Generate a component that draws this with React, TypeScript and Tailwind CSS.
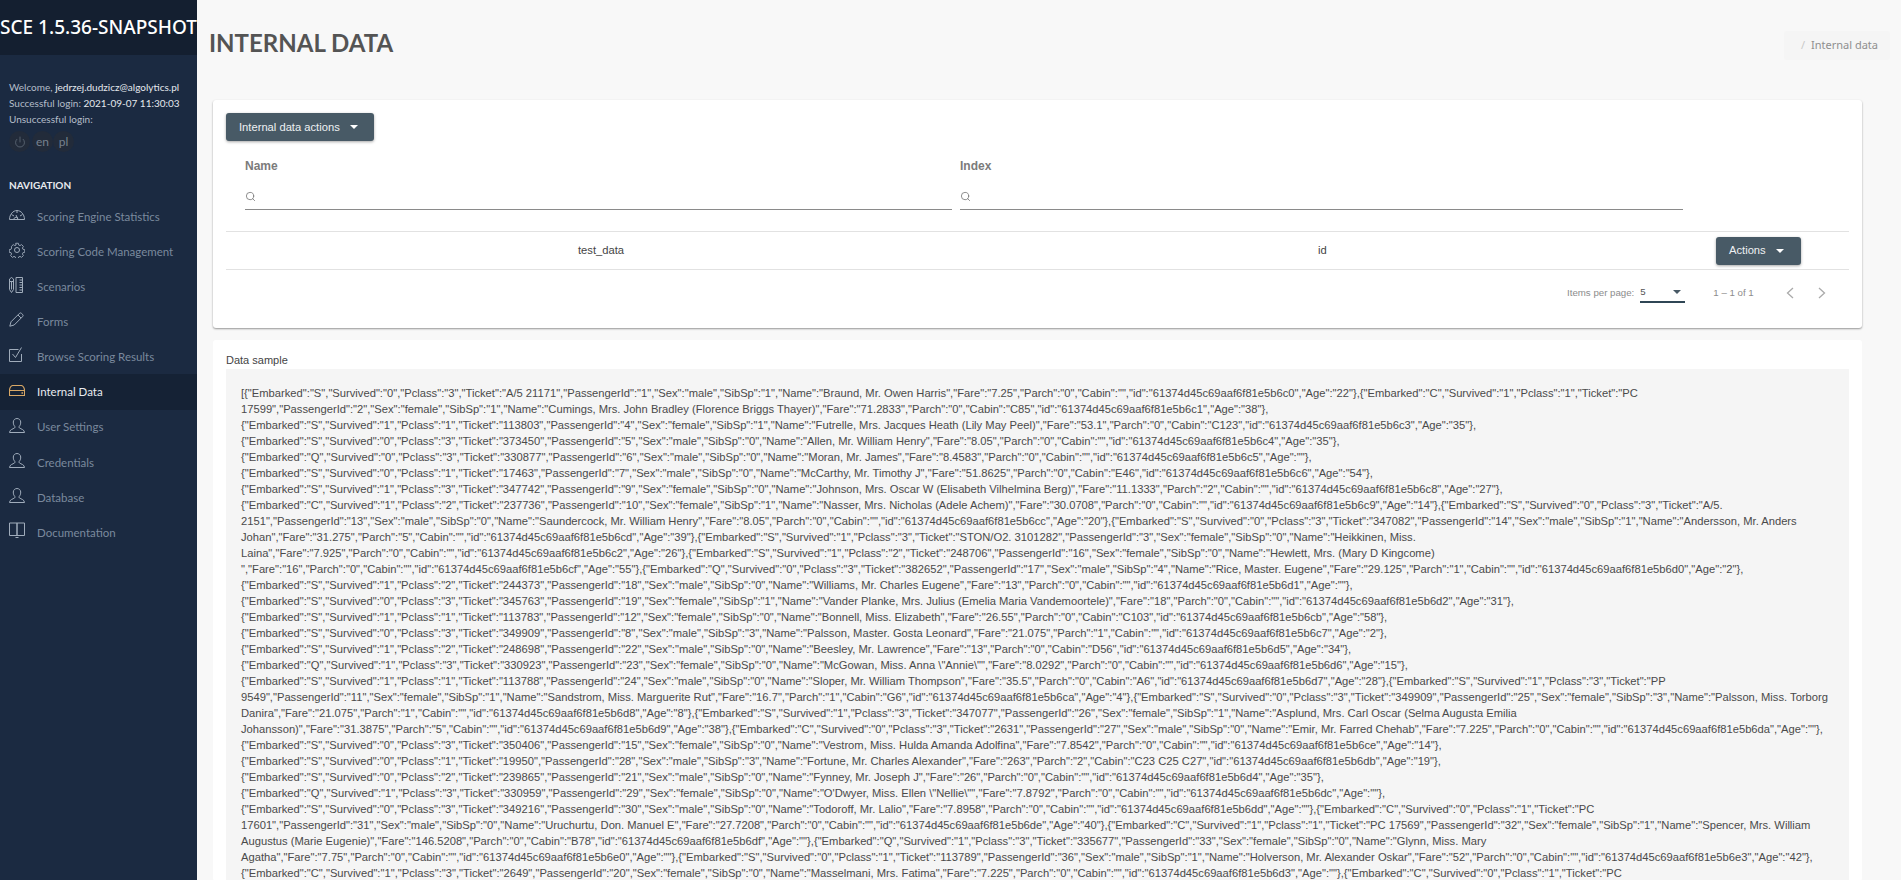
import React from 'react'
import { Search, Power } from 'lucide-react'

const NAV_FONT = 'font-["Lato",sans-serif]'

const Gauge = () => (
  <svg viewBox="0 0 16 10" className="w-4 h-[10px]" fill="none" stroke="currentColor" strokeWidth="1">
    <path d="M.5 9.500C.5 4.500 4 .5 8 .5s7.500 4 7.500 9z" />
    <path d="M2.500 4.500 5 6M8 .5v2.500M13.500 4.500 11 6M4.500 9.500A3.500 3.500 0 0 1 8 7l1 2.500L7 5" />
  </svg>
)

const Cog = () => (
  <svg viewBox="0 0 16 16" className="w-4 h-4" fill="none" stroke="currentColor" strokeWidth="1">
    <path d="M6.500.5h3l.4 2 1.400.6 1.800-1.100 2 2-1.100 1.800.6 1.400 2 .4v3l-2 .4-.6 1.400 1.100 1.800-2 2-1.800-1.100-1.400.6-.4 2h-3l-.4-2-1.400-.6-1.800 1.100-2-2 1.100-1.800-.6-1.400-2-.4v-3l2-.4.6-1.400L1.800 4l2-2 1.800 1.100L7 2.500z" transform="translate(0.8 0.8) scale(0.9)" />
    <circle cx="8" cy="8" r="2.500" />
  </svg>
)

const Layers = () => (
  <svg viewBox="0 0 14 16" className="w-[14px] h-4" fill="none" stroke="currentColor" strokeWidth="1">
    <path d="M.5 2 2.500.5 4.500 2v10.500L2.500 15.500 .5 12.500zM.5 4.500h4M2.500 4.500v8" />
    <path d="M7 .5h6.500v15H7zM10.500 3h3M10.500 5.500h3M10.500 8h3M10.500 10.500h3M10.500 13h3" />
  </svg>
)

const Pencil = () => (
  <svg viewBox="0 0 15 15" className="w-[15px] h-[15px]" fill="none" stroke="currentColor" strokeWidth="1">
    <path d="M.8 14.200 2 9.800 10.300 1.500a1.700 1.700 0 0 1 2.400 0l.8.8a1.700 1.700 0 0 1 0 2.400L5.200 13z" />
    <path d="M9 3l3 3" />
  </svg>
)

const Check = () => (
  <svg viewBox="0 0 14 15" className="w-[14px] h-[15px]" fill="none" stroke="currentColor" strokeWidth="1">
    <path d="M12.500 7v7.500H.5V2.500h9" />
    <path d="M3.500 7l3 3.500L12.500.5" />
  </svg>
)

const Drawer = () => (
  <svg viewBox="0 0 16 11" className="w-4 h-[11px]" fill="none" stroke="currentColor" strokeWidth="1.100">
    <path d="M.5 5.500C.5 3 2 .5 4 .5h8c2 0 3.500 2.500 3.500 5v5H.5zM.5 5.500h15" />
    <path d="M12.500 8h1.500" strokeWidth="1.500" />
  </svg>
)

const UserIcon = () => (
  <svg viewBox="0 0 16 15" className="w-4 h-[15px]" fill="none" stroke="currentColor" strokeWidth="1">
    <path d="M.5 14.500h15c0-2.800-3.500-3.500-5-4.500-.6-.5-.6-1.500 0-2 1-1 1.200-2.500 1.200-4C11.700 2 10 .5 8 .5S4.300 2 4.300 4c0 1.500.2 3 1.200 4 .6.500.6 1.500 0 2-1.500 1-5 1.700-5 4.500z" />
  </svg>
)

const Book = () => (
  <svg viewBox="0 0 16 16" className="w-4 h-4" fill="none" stroke="currentColor" strokeWidth="1">
    <path d="M.5 1h7.500v12.500H.5zM8 1h7.500v12.500H8zM6.500 15.500h3" />
  </svg>
)

const Caret = ({ className }: { className: string }) => (
  <span className={`w-0 h-0 border-x-4 border-x-transparent border-t-4 ${className}`} />
)

const NAV = [
  { label: 'Scoring Engine Statistics', icon: <Gauge /> },
  { label: 'Scoring Code Management', icon: <Cog /> },
  { label: 'Scenarios', icon: <Layers /> },
  { label: 'Forms', icon: <Pencil /> },
  { label: 'Browse Scoring Results', icon: <Check /> },
  { label: 'Internal Data', icon: <Drawer />, active: true },
  { label: 'User Settings', icon: <UserIcon /> },
  { label: 'Credentials', icon: <UserIcon /> },
  { label: 'Database', icon: <UserIcon /> },
  { label: 'Documentation', icon: <Book /> },
]

const ID = '61374d45c69aaf6f81e5b6'

const SAMPLE = [
  `[{"Embarked":"S","Survived":"0","Pclass":"3","Ticket":"A/5 21171","PassengerId":"1","Sex":"male","SibSp":"1","Name":"Braund, Mr. Owen Harris","Fare":"7.25","Parch":"0","Cabin":"","id":"${ID}c0","Age":"22"},{"Embarked":"C","Survived":"1","Pclass":"1","Ticket":"PC`,
  `17599","PassengerId":"2","Sex":"female","SibSp":"1","Name":"Cumings, Mrs. John Bradley (Florence Briggs Thayer)","Fare":"71.2833","Parch":"0","Cabin":"C85","id":"${ID}c1","Age":"38"},`,
  `{"Embarked":"S","Survived":"1","Pclass":"1","Ticket":"113803","PassengerId":"4","Sex":"female","SibSp":"1","Name":"Futrelle, Mrs. Jacques Heath (Lily May Peel)","Fare":"53.1","Parch":"0","Cabin":"C123","id":"${ID}c3","Age":"35"},`,
  `{"Embarked":"S","Survived":"0","Pclass":"3","Ticket":"373450","PassengerId":"5","Sex":"male","SibSp":"0","Name":"Allen, Mr. William Henry","Fare":"8.05","Parch":"0","Cabin":"","id":"${ID}c4","Age":"35"},`,
  `{"Embarked":"Q","Survived":"0","Pclass":"3","Ticket":"330877","PassengerId":"6","Sex":"male","SibSp":"0","Name":"Moran, Mr. James","Fare":"8.4583","Parch":"0","Cabin":"","id":"${ID}c5","Age":""},`,
  `{"Embarked":"S","Survived":"0","Pclass":"1","Ticket":"17463","PassengerId":"7","Sex":"male","SibSp":"0","Name":"McCarthy, Mr. Timothy J","Fare":"51.8625","Parch":"0","Cabin":"E46","id":"${ID}c6","Age":"54"},`,
  `{"Embarked":"S","Survived":"1","Pclass":"3","Ticket":"347742","PassengerId":"9","Sex":"female","SibSp":"0","Name":"Johnson, Mrs. Oscar W (Elisabeth Vilhelmina Berg)","Fare":"11.1333","Parch":"2","Cabin":"","id":"${ID}c8","Age":"27"},`,
  `{"Embarked":"C","Survived":"1","Pclass":"2","Ticket":"237736","PassengerId":"10","Sex":"female","SibSp":"1","Name":"Nasser, Mrs. Nicholas (Adele Achem)","Fare":"30.0708","Parch":"0","Cabin":"","id":"${ID}c9","Age":"14"},{"Embarked":"S","Survived":"0","Pclass":"3","Ticket":"A/5.`,
  `2151","PassengerId":"13","Sex":"male","SibSp":"0","Name":"Saundercock, Mr. William Henry","Fare":"8.05","Parch":"0","Cabin":"","id":"${ID}cc","Age":"20"},{"Embarked":"S","Survived":"0","Pclass":"3","Ticket":"347082","PassengerId":"14","Sex":"male","SibSp":"1","Name":"Andersson, Mr. Anders`,
  `Johan","Fare":"31.275","Parch":"5","Cabin":"","id":"${ID}cd","Age":"39"},{"Embarked":"S","Survived":"1","Pclass":"3","Ticket":"STON/O2. 3101282","PassengerId":"3","Sex":"female","SibSp":"0","Name":"Heikkinen, Miss.`,
  `Laina","Fare":"7.925","Parch":"0","Cabin":"","id":"${ID}c2","Age":"26"},{"Embarked":"S","Survived":"1","Pclass":"2","Ticket":"248706","PassengerId":"16","Sex":"female","SibSp":"0","Name":"Hewlett, Mrs. (Mary D Kingcome)`,
  `","Fare":"16","Parch":"0","Cabin":"","id":"${ID}cf","Age":"55"},{"Embarked":"Q","Survived":"0","Pclass":"3","Ticket":"382652","PassengerId":"17","Sex":"male","SibSp":"4","Name":"Rice, Master. Eugene","Fare":"29.125","Parch":"1","Cabin":"","id":"${ID}d0","Age":"2"},`,
  `{"Embarked":"S","Survived":"1","Pclass":"2","Ticket":"244373","PassengerId":"18","Sex":"male","SibSp":"0","Name":"Williams, Mr. Charles Eugene","Fare":"13","Parch":"0","Cabin":"","id":"${ID}d1","Age":""},`,
  `{"Embarked":"S","Survived":"0","Pclass":"3","Ticket":"345763","PassengerId":"19","Sex":"female","SibSp":"1","Name":"Vander Planke, Mrs. Julius (Emelia Maria Vandemoortele)","Fare":"18","Parch":"0","Cabin":"","id":"${ID}d2","Age":"31"},`,
  `{"Embarked":"S","Survived":"1","Pclass":"1","Ticket":"113783","PassengerId":"12","Sex":"female","SibSp":"0","Name":"Bonnell, Miss. Elizabeth","Fare":"26.55","Parch":"0","Cabin":"C103","id":"${ID}cb","Age":"58"},`,
  `{"Embarked":"S","Survived":"0","Pclass":"3","Ticket":"349909","PassengerId":"8","Sex":"male","SibSp":"3","Name":"Palsson, Master. Gosta Leonard","Fare":"21.075","Parch":"1","Cabin":"","id":"${ID}c7","Age":"2"},`,
  `{"Embarked":"S","Survived":"1","Pclass":"2","Ticket":"248698","PassengerId":"22","Sex":"male","SibSp":"0","Name":"Beesley, Mr. Lawrence","Fare":"13","Parch":"0","Cabin":"D56","id":"${ID}d5","Age":"34"},`,
  `{"Embarked":"Q","Survived":"1","Pclass":"3","Ticket":"330923","PassengerId":"23","Sex":"female","SibSp":"0","Name":"McGowan, Miss. Anna \\"Annie\\"","Fare":"8.0292","Parch":"0","Cabin":"","id":"${ID}d6","Age":"15"},`,
  `{"Embarked":"S","Survived":"1","Pclass":"1","Ticket":"113788","PassengerId":"24","Sex":"male","SibSp":"0","Name":"Sloper, Mr. William Thompson","Fare":"35.5","Parch":"0","Cabin":"A6","id":"${ID}d7","Age":"28"},{"Embarked":"S","Survived":"1","Pclass":"3","Ticket":"PP`,
  `9549","PassengerId":"11","Sex":"female","SibSp":"1","Name":"Sandstrom, Miss. Marguerite Rut","Fare":"16.7","Parch":"1","Cabin":"G6","id":"${ID}ca","Age":"4"},{"Embarked":"S","Survived":"0","Pclass":"3","Ticket":"349909","PassengerId":"25","Sex":"female","SibSp":"3","Name":"Palsson, Miss. Torborg`,
  `Danira","Fare":"21.075","Parch":"1","Cabin":"","id":"${ID}d8","Age":"8"},{"Embarked":"S","Survived":"1","Pclass":"3","Ticket":"347077","PassengerId":"26","Sex":"female","SibSp":"1","Name":"Asplund, Mrs. Carl Oscar (Selma Augusta Emilia`,
  `Johansson)","Fare":"31.3875","Parch":"5","Cabin":"","id":"${ID}d9","Age":"38"},{"Embarked":"C","Survived":"0","Pclass":"3","Ticket":"2631","PassengerId":"27","Sex":"male","SibSp":"0","Name":"Emir, Mr. Farred Chehab","Fare":"7.225","Parch":"0","Cabin":"","id":"${ID}da","Age":""},`,
  `{"Embarked":"S","Survived":"0","Pclass":"3","Ticket":"350406","PassengerId":"15","Sex":"female","SibSp":"0","Name":"Vestrom, Miss. Hulda Amanda Adolfina","Fare":"7.8542","Parch":"0","Cabin":"","id":"${ID}ce","Age":"14"},`,
  `{"Embarked":"S","Survived":"0","Pclass":"1","Ticket":"19950","PassengerId":"28","Sex":"male","SibSp":"3","Name":"Fortune, Mr. Charles Alexander","Fare":"263","Parch":"2","Cabin":"C23 C25 C27","id":"${ID}db","Age":"19"},`,
  `{"Embarked":"S","Survived":"0","Pclass":"2","Ticket":"239865","PassengerId":"21","Sex":"male","SibSp":"0","Name":"Fynney, Mr. Joseph J","Fare":"26","Parch":"0","Cabin":"","id":"${ID}d4","Age":"35"},`,
  `{"Embarked":"Q","Survived":"1","Pclass":"3","Ticket":"330959","PassengerId":"29","Sex":"female","SibSp":"0","Name":"O'Dwyer, Miss. Ellen \\"Nellie\\"","Fare":"7.8792","Parch":"0","Cabin":"","id":"${ID}dc","Age":""},`,
  `{"Embarked":"S","Survived":"0","Pclass":"3","Ticket":"349216","PassengerId":"30","Sex":"male","SibSp":"0","Name":"Todoroff, Mr. Lalio","Fare":"7.8958","Parch":"0","Cabin":"","id":"${ID}dd","Age":""},{"Embarked":"C","Survived":"0","Pclass":"1","Ticket":"PC`,
  `17601","PassengerId":"31","Sex":"male","SibSp":"0","Name":"Uruchurtu, Don. Manuel E","Fare":"27.7208","Parch":"0","Cabin":"","id":"${ID}de","Age":"40"},{"Embarked":"C","Survived":"1","Pclass":"1","Ticket":"PC 17569","PassengerId":"32","Sex":"female","SibSp":"1","Name":"Spencer, Mrs. William`,
  `Augustus (Marie Eugenie)","Fare":"146.5208","Parch":"0","Cabin":"B78","id":"${ID}df","Age":""},{"Embarked":"Q","Survived":"1","Pclass":"3","Ticket":"335677","PassengerId":"33","Sex":"female","SibSp":"0","Name":"Glynn, Miss. Mary`,
  `Agatha","Fare":"7.75","Parch":"0","Cabin":"","id":"${ID}e0","Age":""},{"Embarked":"S","Survived":"0","Pclass":"1","Ticket":"113789","PassengerId":"36","Sex":"male","SibSp":"1","Name":"Holverson, Mr. Alexander Oskar","Fare":"52","Parch":"0","Cabin":"","id":"${ID}e3","Age":"42"},`,
  `{"Embarked":"C","Survived":"1","Pclass":"3","Ticket":"2649","PassengerId":"20","Sex":"female","SibSp":"0","Name":"Masselmani, Mrs. Fatima","Fare":"7.225","Parch":"0","Cabin":"","id":"${ID}d3","Age":""},{"Embarked":"C","Survived":"0","Pclass":"1","Ticket":"PC`,
]

function DarkButton({ label, className }: { label: string; className: string }) {
  return (
    <button className={`flex items-center h-7 rounded-[3px] bg-[#485a66] text-[#eef1f3] text-[11.200px] shadow-[0_1px_3px_rgba(0,0,0,0.35)] ${className}`}>
      {label}
      <Caret className="ml-[10px] border-t-white" />
    </button>
  )
}

function FilterField({ label, className }: { label: string; className: string }) {
  return (
    <div className={className}>
      <div className="text-[12px] font-bold text-[#7b7b7b] leading-[14px]">{label}</div>
      <div className="h-[24px] mt-[13px] pt-[5px] border-b border-[#8a8a8a]">
        <Search className="w-[11px] h-[11px] text-[#777]" strokeWidth={1.800} />
      </div>
    </div>
  )
}

const PageArrow = ({ d, className }: { d: string; className: string }) => (
  <svg viewBox="0 0 8 12" className={`w-2 h-3 text-[#aaa] ${className}`} fill="none" stroke="currentColor" strokeWidth="1.300">
    <path d={d} />
  </svg>
)

export default function App() {
  return (
    <div className='flex h-screen overflow-hidden bg-[#f8f8f8] font-["Liberation_Sans",sans-serif]'>
      <aside className={`w-[197px] shrink-0 bg-[#1b2a41] ${NAV_FONT}`}>
        <div className='h-[55px] bg-[#141f30] flex items-center justify-center overflow-hidden font-["Noto_Sans",sans-serif]'>
          <span className="whitespace-nowrap text-white text-[19px] font-medium">SCE 1.5.36-SNAPSHOT</span>
        </div>

        <div className="pt-6 pl-[9px] text-[10px] leading-4 whitespace-nowrap text-[#b4bdc9]">
          <div>Welcome, <span className="text-[#e4e8ed]">jedrzej.dudzicz@algolytics.pl</span></div>
          <div>Successful login: <span className="text-[#e4e8ed]">2021-09-07 11:30:03</span></div>
          <div>Unsuccessful login:</div>
          <div className="flex mt-1 text-[#76818f] text-[12px]">
            <span className="flex items-center justify-center w-[21px] h-[21px] rounded-full bg-[#222b3a]">
              <Power className="w-3 h-3" strokeWidth={1.200} />
            </span>
            <span className="flex items-center justify-center w-[21px] h-[21px] rounded-full bg-[#222b3a] ml-[2px]">en</span>
            <span className="flex items-center justify-center w-[21px] h-[21px] rounded-full bg-[#222b3a]">pl</span>
          </div>
        </div>

        <div className="mt-[27px] pl-[9px] text-[10px] font-bold text-[#e8ebef] leading-3">NAVIGATION</div>

        <nav className="mt-2">
          {NAV.map((item) => (
            <div
              key={item.label}
              className={`flex items-center h-[35.100px] pl-[9px] text-[11.500px] ${item.active ? 'bg-[#152235] text-[#e8ebef]' : 'text-[#7a899d]'}`}
            >
              <span className={`w-[28px] flex mb-1 ${item.active ? 'text-[#d9a866]' : 'text-[#a0acbb]'}`}>{item.icon}</span>
              {item.label}
            </div>
          ))}
        </nav>
      </aside>

      <main className="flex-1 min-w-0 pl-4 pr-[39px]">
        <header className="flex justify-between h-[100px] -mr-7">
          <h1 className='mt-[26px] -ml-[4px] text-[24px] leading-[34px] font-bold text-[#545454] font-["Lato",sans-serif]'>INTERNAL DATA</h1>
          <div className='flex items-center h-[29px] mt-[31px] pl-[17px] pr-3 bg-[#f5f5f5] rounded-[3px] text-[11px] text-[#8f8f8f] font-["Noto_Sans",sans-serif]'>
            <span className="text-[#c9c9c9] mr-[6px]">/</span>Internal data
          </div>
        </header>

        <section className="h-[228px] bg-white rounded-[3px] px-[13px] pt-[13px] shadow-[0_1px_2px_rgba(0,0,0,0.4)]">
          <DarkButton label="Internal data actions" className="w-[148px] pl-[13px]" />
          <div className="flex h-[90px] pl-[19px] pt-[18px]">
            <FilterField label="Name" className="w-[707px]" />
            <FilterField label="Index" className="w-[723px] ml-2" />
          </div>
          <div className="flex items-center h-[39px] border-y border-[#e2e2e2] text-[11.200px] text-[#444]">
            <span className="ml-[352px] w-[740px]">test_data</span>
            <span className="w-[398px]">id</span>
            <DarkButton label="Actions" className="w-[85px] pl-[13px]" />
          </div>
          <div className="flex items-center h-[46px] text-[9.700px] text-[#8c8c8c]">
            <span className="ml-[1341px]">Items per page:</span>
            <span className="flex items-center justify-between w-[45px] h-[19px] ml-[6px] border-b-2 border-[#2f4655] text-[#555]">
              5<Caret className="mr-1 border-t-[#485a66]" />
            </span>
            <span className="ml-[28px]">1 – 1 of 1</span>
            <PageArrow d="M7 1 1.500 6 7 11" className="ml-[32px]" />
            <PageArrow d="M1 1 6.500 6 1 11" className="ml-6" />
          </div>
        </section>

        <section className="mt-3 bg-white rounded-[3px] px-[13px] pt-[14px]">
          <div className="text-[11px] leading-[12px] text-[#444]">Data sample</div>
          <div className="mt-[3px] bg-[#f5f5f5] pl-[15px] pt-4 text-[11.200px] leading-4 text-[#4a4a4a]">
            {SAMPLE.map((line, i) => (
              <div key={i} className="whitespace-pre">{line}</div>
            ))}
          </div>
        </section>
      </main>
    </div>
  )
}
